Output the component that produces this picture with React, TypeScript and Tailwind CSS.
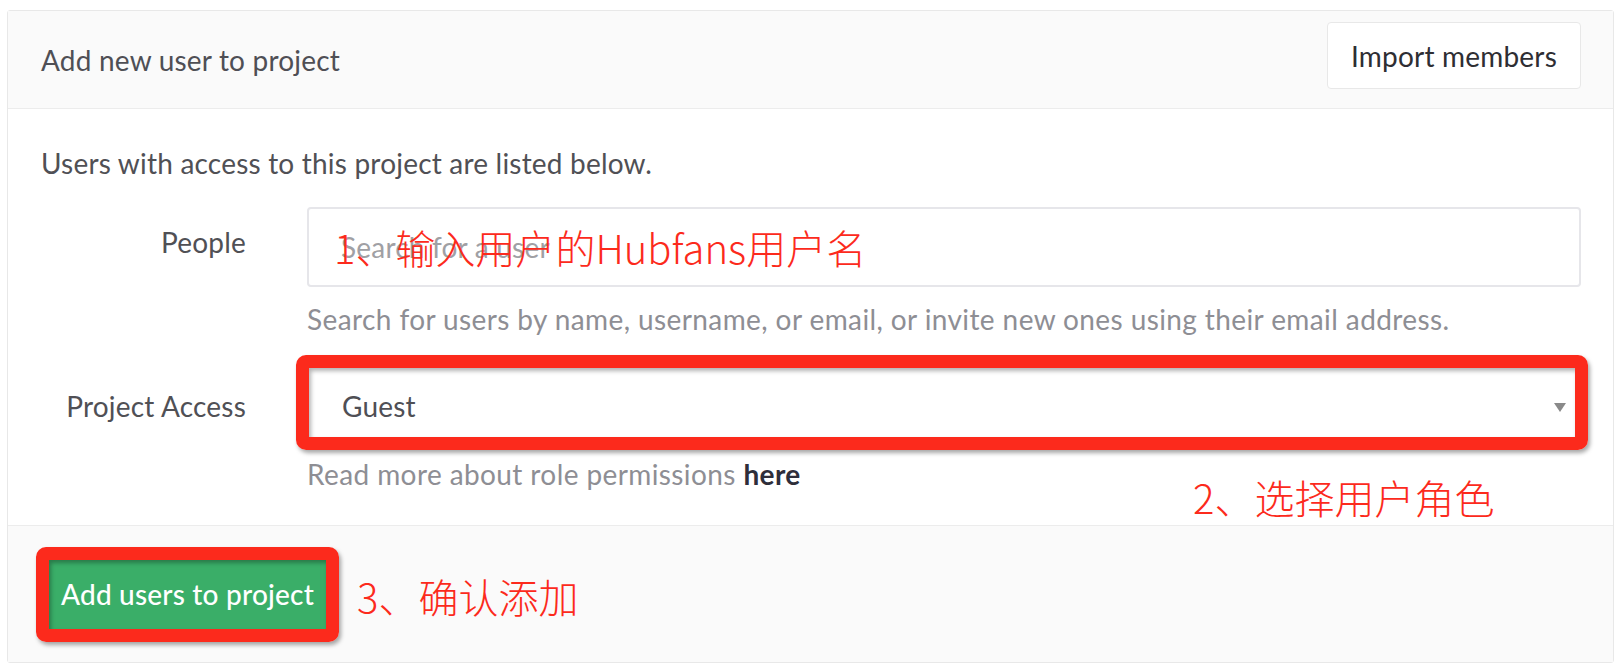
import React from "react";

const ui = { fontFamily: "Lato, 'Open Sans', sans-serif" };
const cjk = { fontFamily: "'Noto Sans CJK SC', 'Noto Sans', sans-serif" };

// red hand-drawn style highlight box laid over a control
function Highlight({ className }: { className: string }) {
    return (
        <div
            className={`pointer-events-none absolute rounded-[10px] border-[13px] border-[#fc2a1c] shadow-[2px_3px_4px_rgba(0,0,0,0.35),inset_2px_3px_4px_rgba(0,0,0,0.3)] ${className}`}
        />
    );
}

function Note({ children, className }: { children: React.ReactNode; className: string }) {
    return (
        <div
            className={`pointer-events-none absolute whitespace-nowrap text-[40px] leading-none font-light text-[#fc2a1c] ${className}`}
            style={cjk}
        >
            {children}
        </div>
    );
}

export default function App() {
    return (
        <div className="relative h-[672px] w-[1622px] bg-white pt-[10px] pl-[7px] tracking-[0.2px]" style={ui}>
            <div className="w-[1607px] rounded-[3px] border border-[#e8e8e8]">
                {/* Header */}
                <div className="flex h-[98px] items-start justify-between border-b border-[#ececec] bg-[#fafafa] pl-[33px] pr-[32px]">
                    <div className="mt-[31px] text-[28px] leading-[36px] text-[#4f4f55]">
                        Add new user to project
                    </div>
                    <button className="mt-[11px] h-[67px] w-[254px] rounded-[4px] border border-[#e8e8e8] bg-white text-[28px] tracking-[0.2px] text-[#2e2e33]">
                        Import members
                    </button>
                </div>

                {/* Body */}
                <div className="border-b border-[#ececec] bg-white pt-[36px] pb-[33px] pl-[33px] pr-[32px]">
                    <div className="mb-[26px] text-[28px] leading-[36px] text-[#505055]">
                        Users with access to this project are listed below.
                    </div>

                    <div className="flex gap-[61px]">
                        <div className="w-[205px] pt-[17px] text-right text-[28px] leading-[36px] text-[#505055]">
                            People
                        </div>
                        <div className="flex-1">
                            <div className="flex h-[80px] items-center rounded-[4px] border-2 border-[#e6e6ea] bg-white pl-[32px] text-[28px] text-[#a0a0a4]">
                                Search for a user
                            </div>
                            <div className="mt-[14px] text-[28px] leading-[36px] tracking-[0.4px] text-[#8e8e94]">
                                Search for users by name, username, or email, or invite new ones using their email address.
                            </div>
                        </div>
                    </div>

                    <div className="mt-[27px] flex gap-[61px]">
                        <div className="w-[205px] pt-[24px] text-right text-[28px] leading-[36px] text-[#505055]">
                            Project Access
                        </div>
                        <div className="flex-1">
                            <div className="relative">
                                <div className="flex h-[84px] items-center justify-between rounded-[4px] border-2 border-[#e6e6ea] bg-white pl-[33px] pr-[13px] text-[28px] text-[#4f4f55]">
                                    <span>Guest</span>
                                    <svg width="12" height="9" viewBox="0 0 12 9" className="mt-[2px]">
                                        <path d="M0 0 L12 0 L6 9 Z" fill="#8a8a8a" />
                                    </svg>
                                </div>
                                <Highlight className="-left-[11px] -right-[7px] -top-[9px] -bottom-[2px]" />
                            </div>
                            <div className="mt-[8px] text-[28px] leading-[36px] tracking-[0.4px] text-[#8e8e94]">
                                Read more about role permissions <b className="font-bold text-[#2e2e3a]">here</b>
                            </div>
                        </div>
                    </div>
                </div>

                {/* Footer */}
                <div className="flex h-[136px] items-center bg-[#fafafa] pl-[39px]">
                    <div className="relative">
                        <button className="h-[73px] w-[281px] rounded-[4px] bg-[#3aae68] text-[28px] font-medium tracking-[0.2px] text-white">
                            Add users to project
                        </button>
                        <Highlight className="-left-[11px] -right-[11px] -top-[11px] -bottom-[11px]" />
                    </div>
                    <div className="ml-[29px] mt-[4px] whitespace-nowrap text-[40px] leading-none font-light tracking-normal text-[#fc2a1c]" style={cjk}>
                        3、确认添加
                    </div>
                </div>
            </div>

            <Note className="left-[334px] top-[227px] text-[39.5px] tracking-normal">1、输入用户的Hubfans用户名</Note>
            <Note className="left-[1193px] top-[477px] tracking-normal">2、选择用户角色</Note>
        </div>
    );
}
